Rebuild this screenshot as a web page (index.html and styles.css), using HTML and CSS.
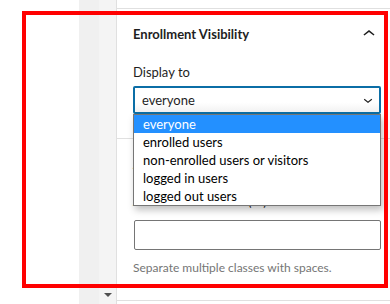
FILE: index.html
```html
<!DOCTYPE html>
<html lang="en">
  <head>
    <meta charset="UTF-8">
    <meta name="viewport" content="width=device-width, initial-scale=1.0">
    <title>Enrollment Visibility</title>
    <link rel="stylesheet" href="styles.css">
  </head>
  <body>
    <div class="screen">
        <div class="canvas"></div>
        <div class="gutter"></div>
        <div class="scroll">
            <span class="scroll-arrow"></span>
        </div>

        <div class="sidebar">
            <div class="sidebar-top"></div>

            <!-- Enrollment visibility panel, open -->
            <div class="panel">
                <div class="panel-head">
                    <span class="panel-title">Enrollment Visibility</span>
                    <svg class="chevron-up" width="24" height="24" viewBox="0 0 24 24"><path d="M6.5 12.4L12 8l5.5 4.4-.9 1.2L12 10l-4.6 3.6-1-1.2z"/></svg>
                </div>
                <p class="field-label">Display to</p>
                <div class="select-wrap">
                    <div class="select">
                        <span>everyone</span>
                        <svg class="chevron-down" width="18" height="18" viewBox="0 0 24 24"><path d="M17.5 11.6L12 16l-5.5-4.4.9-1.2L12 14l4.6-3.6 1 1.2z"/></svg>
                    </div>
                    <ul class="options">
                        <li class="option selected">everyone</li>
                        <li class="option">enrolled users</li>
                        <li class="option">non-enrolled users or visitors</li>
                        <li class="option">logged in users</li>
                        <li class="option">logged out users</li>
                    </ul>
                </div>
            </div>

            <!-- Advanced panel -->
            <div class="panel panel-advanced">
                <div class="panel-head">
                    <span class="panel-title">Advanced</span>
                </div>
                <p class="field-label">Additional CSS class(es)</p>
                <div class="text-input"></div>
                <p class="help">Separate multiple classes with spaces.</p>
            </div>
        </div>

        <div class="highlight-box"></div>
    </div>
  </body>
</html>
```

FILE: styles.css
```css
body {
    margin: 0;
    background-color: white;
    font-family: Lato, "Noto Sans", Arial, sans-serif;
    color: #1e1e1e;
}

.screen {
    position: relative;
    display: flex;
    width: 390px;
    height: 304px;
    overflow: hidden;
}

.canvas {
    width: 79px;
    background-color: white;
}

.gutter {
    width: 20px;
    background-color: #f0f0f0;
}

.scroll {
    width: 17px;
    background-color: #f4f4f4;
    display: flex;
    flex-direction: column;
    justify-content: flex-end;
    align-items: center;
    padding-bottom: 7px;
    box-sizing: border-box;
}

.scroll-arrow {
    width: 0;
    height: 0;
    border-left: 4px solid transparent;
    border-right: 4px solid transparent;
    border-top: 4px solid #505050;
}

.sidebar {
    flex: 1;
    border-left: 1px solid #e0e0e0;
    background-color: white;
}

.sidebar-top {
    height: 8px;
    border-bottom: 1px solid #e0e0e0;
}

.panel {
    padding: 0 9px 24px 16px;
    border-bottom: 1px solid #e0e0e0;
}

.panel-head {
    height: 50px;
    display: flex;
    justify-content: space-between;
    align-items: center;
}

.panel-title {
    font-size: 13px;
    font-weight: 700;
}

.chevron-up {
    fill: #1e1e1e;
    margin-right: 0.5px;
}

.field-label {
    font-size: 13px;
    line-height: 20px;
    margin: 3px 0 4px 0;
}

.select-wrap {
    position: relative;
}

.select {
    height: 28px;
    box-sizing: border-box;
    border: 2px solid #0b6ea6;
    border-radius: 2px;
    padding: 0 2px 0 7px;
    display: flex;
    justify-content: space-between;
    align-items: center;
    font-size: 13px;
    background: linear-gradient(#ffffff 60%, #f2f2f2);
}

.chevron-down {
    fill: #1e1e1e;
}

.options {
    position: absolute;
    top: 100%;
    left: 0;
    right: 0;
    margin: 0;
    padding: 0;
    list-style: none;
    background-color: white;
    border: 1px solid #767676;
    box-shadow: 2px 4px 7px rgba(0, 0, 0, 0.25);
    z-index: 2;
}

.option {
    height: 18px;
    line-height: 18px;
    padding-left: 9px;
    font-size: 13px;
    color: #000;
}

.option.selected {
    background-color: #2390ff;
    color: white;
}

.panel-advanced .field-label {
    margin: 4px 0 11px 0;
    line-height: 16px;
}

.text-input {
    height: 30px;
    box-sizing: border-box;
    border: 1px solid #757575;
    border-radius: 2px;
    margin-left: 1px;
}

.help {
    font-size: 12px;
    line-height: 16px;
    color: #757575;
    margin: 10px 0 0 0;
}

/* red annotation frame drawn over the screenshot */
.highlight-box {
    position: absolute;
    left: 22px;
    top: 11px;
    width: 366px;
    height: 277px;
    box-sizing: border-box;
    border: 4px solid #ff0000;
    z-index: 3;
}
```
